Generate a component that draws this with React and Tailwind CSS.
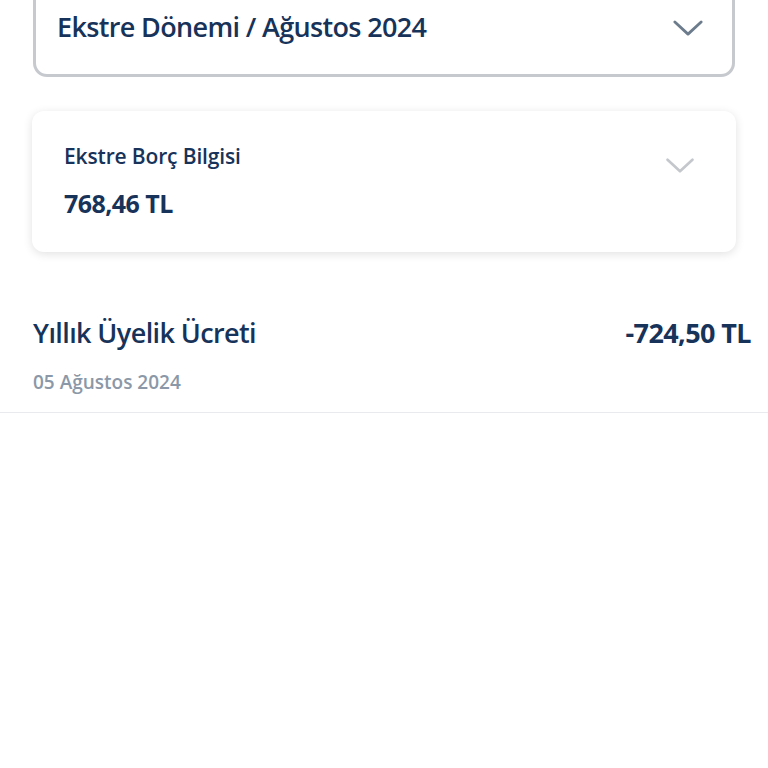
import React from "react";

const Chevron = ({ className }) => (
    <svg viewBox="0 0 32 18" className={className} fill="none" stroke="currentColor" strokeWidth="3" strokeLinecap="round" strokeLinejoin="round">
        <path d="M2 2 L16 15 L30 2" />
    </svg>
);

const App = () => {
    return (
        <div className="w-full min-h-[768px] bg-white font-['Open_Sans',sans-serif] text-[#17335a]">
            <div className="px-[33px]">
                <div className="-mt-[30px] h-[107px] border-[3px] border-[#c6c9ce] rounded-[14px] flex items-end justify-between pb-[34px] pl-[21px] pr-[29px]">
                    <span className="text-[27px] font-semibold tracking-[-0.65px] leading-none">Ekstre Dönemi / Ağustos 2024</span>
                    <Chevron className="w-[30px] h-[17px] text-[#6d7c8c] mb-[3px]" />
                </div>
            </div>

            <div className="px-[32px] mt-[34px]">
                <div className="h-[141px] rounded-[12px] bg-white shadow-[0_2px_10px_rgba(0,0,0,0.12)] flex items-center justify-between pl-[32px] pr-[41px]">
                    <div className="flex flex-col gap-[24px] -mt-[1px]">
                        <span className="text-[21px] font-semibold tracking-[-0.15px] leading-none">Ekstre Borç Bilgisi</span>
                        <span className="text-[25px] font-bold tracking-[-0.55px] leading-none">768,46 TL</span>
                    </div>
                    <Chevron className="w-[30px] h-[16px] text-[#c4c8cd] -mt-[32px]" />
                </div>
            </div>

            <div className="mt-[67px] border-b border-[#e8eaed] pl-[33px] pr-[17px] pb-[20px]">
                <div className="flex items-center justify-between">
                    <span className="text-[27px] font-semibold tracking-[-0.6px] leading-none">Yıllık Üyelik Ücreti</span>
                    <span className="text-[27px] font-bold tracking-[-0.6px] leading-none">-724,50 TL</span>
                </div>
                <div className="mt-[27px] text-[19px] font-semibold text-[#8b98a7] tracking-[0px] leading-none">05 Ağustos 2024</div>
            </div>
        </div>
    );
};

export default App;
